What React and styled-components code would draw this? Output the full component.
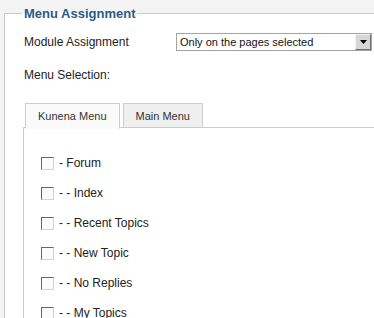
import React from "react";
import styled, { createGlobalStyle } from "styled-components";

const GlobalStyle = createGlobalStyle`
  html, body {
    margin: 0;
    padding: 0;
    background: #f3f3f3;
    overflow: hidden;
  }
  body {
    font-family: "Liberation Sans", Arial, sans-serif;
    color: #333;
  }
`;

const items = [
  "- Forum",
  "- - Index",
  "- - Recent Topics",
  "- - New Topic",
  "- - No Replies",
  "- - My Topics",
];

const App = () => {
  return (
    <>
      <GlobalStyle />
      <Page>
        <Fieldset>
          <Legend>Menu Assignment</Legend>
          <FieldRow>
            <Label>Module Assignment</Label>
            <SelectBox>
              <SelectText>Only on the pages selected</SelectText>
              <SelectButton>
                <svg width="7" height="4" viewBox="0 0 7 4">
                  <path d="M0 0h7L3.5 4z" fill="#000" />
                </svg>
              </SelectButton>
            </SelectBox>
          </FieldRow>
          <Caption>Menu Selection:</Caption>
          <Tabs>
            <TabList>
              <Tab $active>Kunena Menu</Tab>
              <Tab>Main Menu</Tab>
              <TabFill />
            </TabList>
            <Panel>
              {items.map((item) => (
                <CheckRow key={item}>
                  <Check type="checkbox" />
                  <CheckLabel>{item}</CheckLabel>
                </CheckRow>
              ))}
            </Panel>
          </Tabs>
        </Fieldset>
      </Page>
    </>
  );
};

const Page = styled.div`
  width: 420px;
  padding-top: 6px;
`;

const Fieldset = styled.fieldset`
  margin: 0 0 0 4px;
  padding: 0 0 0 19px;
  border: 1px solid #cccccc;
  background: #ffffff;
  min-inline-size: 0;
`;

const Legend = styled.legend`
  padding: 0 2px;
  margin-left: -2px;
  font-size: 13px;
  line-height: 15px;
  font-weight: bold;
  color: #2b5a8a;
`;

const FieldRow = styled.div`
  display: flex;
  align-items: center;
  margin-top: 12px;
  height: 18px;
`;

const Label = styled.div`
  width: 152px;
  font-size: 12px;
  color: #222;
`;

const SelectBox = styled.div`
  box-sizing: border-box;
  width: 196px;
  height: 18px;
  display: flex;
  align-items: center;
  border: 1px solid #a3a3a3;
  background: #fff;
`;

const SelectText = styled.div`
  flex: 1;
  padding-left: 3px;
  font-size: 11px;
  color: #111;
  white-space: nowrap;
`;

const SelectButton = styled.div`
  box-sizing: border-box;
  width: 16px;
  height: 16px;
  display: flex;
  align-items: center;
  justify-content: center;
  background: #d6d6d6;
  border-top: 1px solid #f4f4f4;
  border-left: 1px solid #f4f4f4;
  border-right: 1px solid #6f6f6f;
  border-bottom: 1px solid #6f6f6f;
`;

const Caption = styled.div`
  margin-top: 17px;
  font-size: 12px;
  line-height: 14px;
  color: #222;
`;

const Tabs = styled.div`
  margin-top: 21px;
  margin-left: -1px;
`;

const TabList = styled.div`
  display: flex;
  align-items: flex-end;
  gap: 3px;
  padding-left: 2px;
`;

const Tab = styled.div`
  box-sizing: border-box;
  height: ${(p) => (p.$active ? "26px" : "25px")};
  padding: 0 12px;
  display: flex;
  align-items: center;
  font-size: 11px;
  color: #333;
  border: 1px solid #cccccc;
  border-bottom: ${(p) => (p.$active ? "1px solid #fafafa" : "1px solid #cccccc")};
  background: ${(p) => (p.$active ? "#fafafa" : "#efefef")};
  margin-bottom: ${(p) => (p.$active ? "-1px" : "0")};
  position: relative;
`;

const TabFill = styled.div`
  flex: 1;
  margin-left: -3px;
  border-bottom: 1px solid #cccccc;
`;

const Panel = styled.div`
  border-left: 1px solid #cccccc;
  border-top: 1px solid #cccccc;
  margin-top: -1px;
  padding: 20px 0 20px 17px;
  background: #fff;
`;

const CheckRow = styled.div`
  display: flex;
  align-items: center;
  height: 30px;
  gap: 5px;
`;

const Check = styled.input`
  appearance: none;
  box-sizing: border-box;
  width: 13px;
  height: 13px;
  margin: 0;
  background: #fbfbfb;
  border-top: 1px solid #666;
  border-left: 1px solid #666;
  border-right: 1px solid #d4d4d4;
  border-bottom: 1px solid #d4d4d4;
`;

const CheckLabel = styled.span`
  font-size: 12px;
  color: #222;
`;

export default App;
